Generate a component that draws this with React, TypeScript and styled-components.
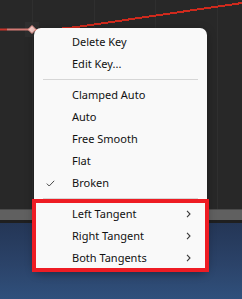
import React from 'react';
import styled, { createGlobalStyle } from 'styled-components';

const GlobalStyle = createGlobalStyle`
  html, body {
    margin: 0;
    padding: 0;
    background: #282828;
  }
`;

const Screen = styled.div`
  position: relative;
  width: 242px;
  height: 299px;
  overflow: hidden;
  display: flex;
  flex-direction: column;
  font-family: 'Noto Sans', 'Open Sans', sans-serif;
`;

const GraphArea = styled.div`
  height: 209px;
  background-color: #282828;
  flex-shrink: 0;
`;

const Ruler = styled.div`
  height: 10px;
  background-color: #606060;
  border-top: 1px solid #4a4a4a;
  flex-shrink: 0;
`;

const Divider = styled.div`
  height: 3px;
  background-color: #1f1f1f;
  flex-shrink: 0;
`;

const Scene = styled.div`
  flex: 1;
  background: linear-gradient(to bottom, #243656 0%, #2b4369 55%, #30507c 100%);
`;

const Menu = styled.div`
  position: absolute;
  left: 34px;
  top: 28px;
  width: 173px;
  padding: 3px 0;
  background-color: #f9f9f9;
  border-radius: 7px;
  box-shadow: 0 2px 8px rgba(0, 0, 0, 0.35);
  display: flex;
  flex-direction: column;
`;

const Item = styled.div`
  position: relative;
  box-sizing: border-box;
  height: 22px;
  display: flex;
  align-items: center;
  padding: 0 0 2px 38px;
  font-size: 11px;
  color: #111111;
  white-space: nowrap;
`;

const Check = styled.span`
  position: absolute;
  left: 12px;
  top: 8px;
  display: flex;
`;

const Chevron = styled.span`
  position: absolute;
  left: 152px;
  top: 7px;
  display: flex;
`;

const Separator = styled.div`
  height: 9px;
  display: flex;
  align-items: center;
  padding: 0 9px;

  &::after {
    content: '';
    flex: 1;
    height: 1px;
    background-color: #d6d6d6;
  }
`;

const Highlight = styled.div`
  position: absolute;
  left: 32px;
  top: 199px;
  width: 177px;
  height: 73px;
  box-sizing: border-box;
  border: 4px solid #ee1c24;
`;

const GraphChart = () => (
  <svg width="242" height="209" viewBox="0 0 242 209" style={{ display: 'block' }}>
    <rect x="25" y="22" width="14" height="15" fill="#2e2e2e" />
    {[32, 94, 155, 217].map(x => (
      <line key={x} x1={x + 0.5} y1="0" x2={x + 0.5} y2="209" stroke="#2f2f2f" strokeWidth="1" />
    ))}
    <line x1="0" y1="29.5" x2="7" y2="29.5" stroke="#c9342b" strokeWidth="2" />
    <line x1="7" y1="29.5" x2="30" y2="29.5" stroke="#d47a74" strokeWidth="2" />
    <path d="M32 29.5 Q 55 30 77 27 L 242 3" fill="none" stroke="#cf2a1d" strokeWidth="2" shapeRendering="crispEdges" />
    <path d="M32 25.5 L36 29.5 L32 33.5 L28 29.5 Z" fill="#f2c9c4" stroke="#d98a83" strokeWidth="1" />
  </svg>
);

const CheckIcon = () => (
  <svg width="9" height="7" viewBox="0 0 9 7">
    <path d="M0.8 3.6 L3.2 6 L8.2 0.8" fill="none" stroke="#4a4a4a" strokeWidth="1" />
  </svg>
);

const ChevronIcon = () => (
  <svg width="5" height="8" viewBox="0 0 5 8">
    <path d="M1 0.8 L4 4 L1 7.2" fill="none" stroke="#3a3a3a" strokeWidth="1.1" />
  </svg>
);

interface MenuEntry {
  label?: string;
  checked?: boolean;
  submenu?: boolean;
  separator?: boolean;
}

const entries: MenuEntry[] = [
  { label: 'Delete Key' },
  { label: 'Edit Key...' },
  { separator: true },
  { label: 'Clamped Auto' },
  { label: 'Auto' },
  { label: 'Free Smooth' },
  { label: 'Flat' },
  { label: 'Broken', checked: true },
  { separator: true },
  { label: 'Left Tangent', submenu: true },
  { label: 'Right Tangent', submenu: true },
  { label: 'Both Tangents', submenu: true },
];

const App: React.FC = () => {
  return (
    <>
      <GlobalStyle />
      <Screen>
        <GraphArea>
          <GraphChart />
        </GraphArea>
        <Ruler />
        <Divider />
        <Scene />
        <Menu>
          {entries.map((e, i) =>
            e.separator ? (
              <Separator key={i} />
            ) : (
              <Item key={i}>
                {e.checked && (
                  <Check>
                    <CheckIcon />
                  </Check>
                )}
                {e.label}
                {e.submenu && (
                  <Chevron>
                    <ChevronIcon />
                  </Chevron>
                )}
              </Item>
            )
          )}
        </Menu>
        <Highlight />
      </Screen>
    </>
  );
};

export default App;
